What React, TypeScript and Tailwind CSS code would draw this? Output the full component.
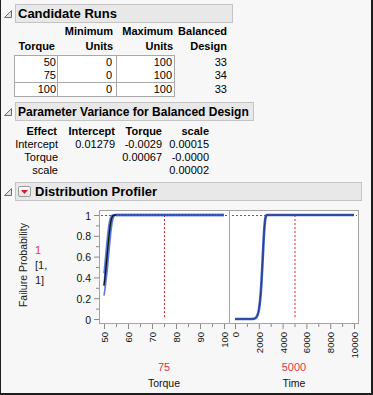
import React from 'react';

// page coordinate helpers for the profiler chart
const yP = (p: number) => 319 - 104 * p;
const x1 = (t: number) => 104 + (t - 50) * 2.4;
const x2 = (T: number) => 235 + T * 0.0119;

const weib1 = (t: number, mu: number) => 1 - Math.exp(-Math.exp((t - mu) / 1.46));
const weib2 = (T: number) => 1 - Math.exp(-Math.pow(T / 2350, 15));

const steps = (a: number, b: number, n: number) => {
    const out: number[] = [];
    for (let i = 0; i <= n; i++) out.push(a + ((b - a) * i) / n);
    return out;
};

const toPath = (pts: [number, number][]) =>
    pts.map((p, i) => (i ? 'L' : 'M') + p[0].toFixed(2) + ',' + p[1].toFixed(2)).join(' ');

const T1 = steps(50, 100, 200);
const T2 = steps(0, 10000, 400);

const mainPath1 = toPath(T1.map(t => [x1(t), yP(weib1(t, 51.39))]));
const upper1 = T1.map(t => [x1(t), yP(weib1(t, 50.8))] as [number, number]);
const lower1 = T1.map(t => [x1(t), yP(weib1(t, 52.0))] as [number, number]);
const band1 = toPath([...upper1, ...lower1.slice().reverse()]) + ' Z';
const upperPath1 = toPath(upper1);
const lowerPath1 = toPath(lower1);
const mainPath2 = toPath(T2.map(T => [x2(T), yP(weib2(T))]));

const Disclosure = () => (
    <svg width="10" height="10" viewBox="0 0 10 10" className="shrink-0">
        <polygon points="8.5,1.5 8.5,8.5 1.5,8.5" fill="#e2e2e2" stroke="#6e6e6e" strokeWidth="1" />
    </svg>
);

const MenuButton = () => (
    <div className="ml-[2px] w-[13px] h-[11px] rounded-[2px] border border-[#9c9c9c] bg-gradient-to-b from-white to-[#e4e4e4] flex items-center justify-center">
        <svg width="7" height="4" viewBox="0 0 7 4">
            <polygon points="0,0 7,0 3.5,4" fill="#e0182a" />
        </svg>
    </div>
);

interface HeaderProps {
    title: string;
    boxClass: string;
    textClass?: string;
    menu?: boolean;
}

const Header: React.FC<HeaderProps> = ({ title, boxClass, textClass = 'text-[13px]', menu }) => (
    <div className="flex items-center h-[19px]">
        <div className="w-[14px] pl-[2px] flex items-center">
            <Disclosure />
        </div>
        <div className={`h-full flex items-center border border-[#c4c4c4] bg-[#e8e8e8] ${boxClass}`}>
            {menu && <MenuButton />}
            <span className={`${menu ? 'ml-[4px]' : 'ml-[2px]'} ${textClass} font-bold leading-none text-black whitespace-nowrap`}>
                {title}
            </span>
        </div>
    </div>
);

const runs = [
    ['50', '0', '100', '33'],
    ['75', '0', '100', '34'],
    ['100', '0', '100', '33'],
];

const CandidateRuns = () => (
    <div className="ml-[13px] mt-[1px] w-[215px]">
        {/* column headers */}
        <div className="grid grid-cols-[44px_59px_58px_54px] text-[11px] font-bold leading-[15px] text-black">
            <div className="text-right pr-[3px]">
                <div>&nbsp;</div>
                <div>Torque</div>
            </div>
            <div className="text-right pr-[4px]">
                <div>Minimum</div>
                <div>Units</div>
            </div>
            <div className="text-right pr-[2px]">
                <div>Maximum</div>
                <div>Units</div>
            </div>
            <div className="text-right pr-[2px]">
                <div>Balanced</div>
                <div>Design</div>
            </div>
        </div>

        {/* rows */}
        <div className="mt-[1px] text-[11px] leading-[13px] text-black">
            {runs.map((r, i) => (
                <div key={i} className="grid grid-cols-[44px_59px_58px_54px] h-[14px]">
                    <div className={`bg-white border-l border-r border-b border-[#a8a8a8] text-right pr-[1px] ${i === 0 ? 'border-t' : ''}`}>
                        {r[0]}
                    </div>
                    <div className={`bg-white border-r border-b border-[#a8a8a8] text-right pr-[4px] ${i === 0 ? 'border-t' : ''}`}>
                        {r[1]}
                    </div>
                    <div className={`bg-white border-r border-b border-[#a8a8a8] text-right pr-[2px] ${i === 0 ? 'border-t' : ''}`}>
                        {r[2]}
                    </div>
                    <div className={`text-right pr-[2px] ${i === 0 ? 'pt-[1px]' : ''}`}>{r[3]}</div>
                </div>
            ))}
        </div>
    </div>
);

const variance = [
    ['Intercept', '0.01279', '-0.0029', '0.00015'],
    ['Torque', '', '0.00067', '-0.0000'],
    ['scale', '', '', '0.00002'],
];

const ParameterVariance = () => (
    <div className="ml-[13px] mt-[4px] text-[11px] leading-[13px] text-black">
        <div className="grid grid-cols-[45px_57px_47px_47px] font-bold">
            <div className="text-right pr-[2px]">Effect</div>
            <div className="text-right pr-[1px]">Intercept</div>
            <div className="text-right pr-[1px]">Torque</div>
            <div className="text-right pr-[1px]">scale</div>
        </div>
        {variance.map((r, i) => (
            <div key={i} className="grid grid-cols-[45px_57px_47px_47px]">
                <div className="text-right pr-[1px]">{r[0]}</div>
                <div className="text-right pr-[1px]">{r[1]}</div>
                <div className="text-right pr-[1px]">{r[2]}</div>
                <div className="text-right pr-[1px]">{r[3]}</div>
            </div>
        ))}
    </div>
);

const Chart = () => {
    const yMajor = [0, 0.2, 0.4, 0.6, 0.8, 1];
    const yMinor = [0.1, 0.3, 0.5, 0.7, 0.9];
    const tMajor = [50, 60, 70, 80, 90, 100];
    const tMinor = [55, 65, 75, 85, 95];
    const TMajor = [0, 2000, 4000, 6000, 8000, 10000];
    const TMinor = [1000, 3000, 5000, 7000, 9000];
    const tick = '#8a8a8a';

    return (
        <svg width="303" height="161" viewBox="0 0 303 161" className="shrink-0">
            <g transform="translate(-58,-201)" fontFamily='"Liberation Sans", Arial, sans-serif'>
                {/* frames */}
                <rect x="99.5" y="210.5" width="130" height="113" fill="white" stroke="#a4a4a4" />
                <rect x="229.5" y="210.5" width="129" height="113" fill="white" stroke="#a4a4a4" />

                {/* y axis */}
                {yMajor.map(p => (
                    <g key={p}>
                        <line x1="94" x2="99" y1={yP(p) + 0.5} y2={yP(p) + 0.5} stroke={tick} />
                        <text x="91" y={yP(p) + 0.5} fontSize="10.5" textAnchor="end" dominantBaseline="central" fill="#111">
                            {p === 0 || p === 1 ? String(p) : p.toFixed(1)}
                        </text>
                    </g>
                ))}
                {yMinor.map(p => (
                    <line key={p} x1="96" x2="99" y1={yP(p) + 0.5} y2={yP(p) + 0.5} stroke={tick} />
                ))}

                {/* x axis, plot 1 */}
                {tMajor.map(t => (
                    <g key={t}>
                        <line x1={x1(t) + 0.5} x2={x1(t) + 0.5} y1="324" y2="329" stroke={tick} />
                        <text
                            transform={`translate(${x1(t) + 0.5},332) rotate(-90)`}
                            fontSize="9.5"
                            textAnchor="end"
                            dominantBaseline="central"
                            fill="#111"
                        >
                            {t}
                        </text>
                    </g>
                ))}
                {tMinor.map(t => (
                    <line key={t} x1={x1(t) + 0.5} x2={x1(t) + 0.5} y1="324" y2="327" stroke={tick} />
                ))}

                {/* x axis, plot 2 */}
                {TMajor.map(T => (
                    <g key={T}>
                        <line x1={x2(T) + 0.5} x2={x2(T) + 0.5} y1="324" y2="329" stroke={tick} />
                        <text
                            transform={`translate(${x2(T) + 0.5},332) rotate(-90)`}
                            fontSize="9.5"
                            textAnchor="end"
                            dominantBaseline="central"
                            fill="#111"
                        >
                            {T}
                        </text>
                    </g>
                ))}
                {TMinor.map(T => (
                    <line key={T} x1={x2(T) + 0.5} x2={x2(T) + 0.5} y1="324" y2="327" stroke={tick} />
                ))}

                {/* crosshairs */}
                <line x1="101" x2="228" y1={yP(1) + 0.5} y2={yP(1) + 0.5} stroke="#e8202a" strokeDasharray="2 2" />
                <line x1="232" x2="357" y1={yP(1) + 0.5} y2={yP(1) + 0.5} stroke="#e8202a" strokeDasharray="2 2" />
                <line x1={x1(75) + 0.5} x2={x1(75) + 0.5} y1={yP(1)} y2={yP(0)} stroke="#e8202a" strokeDasharray="2 2" />
                <line x1={x2(5000) + 0.5} x2={x2(5000) + 0.5} y1={yP(1)} y2={yP(0)} stroke="#e8202a" strokeDasharray="2 2" />

                {/* plot 1 curve with band */}
                <path d={band1} fill="#b9cdf4" />
                <path d={upperPath1} fill="none" stroke="#5b80dc" strokeWidth="1.6" />
                <path d={lowerPath1} fill="none" stroke="#5b80dc" strokeWidth="1.6" />
                <path d={mainPath1} fill="none" stroke="#3556b8" strokeWidth="2.4" strokeLinejoin="round" opacity="0.55" />
                <path d={mainPath1} fill="none" stroke="#111" strokeWidth="1.3" strokeLinejoin="round" />
                <line x1={x1(55)} x2={x1(100)} y1={yP(1)} y2={yP(1)} stroke="#3a5cc0" strokeWidth="2.6" />
                <line x1={x1(55)} x2={x1(100)} y1={yP(1)} y2={yP(1)} stroke="#24347a" strokeWidth="0.8" strokeDasharray="1 2" />

                {/* plot 2 curve */}
                <path d={mainPath2} fill="none" stroke="#3a5cc0" strokeWidth="2.6" strokeLinejoin="round" />
                <path d={mainPath2} fill="none" stroke="#24347a" strokeWidth="0.8" strokeLinejoin="round" />
            </g>
        </svg>
    );
};

const DistributionProfiler = () => (
    <div>
        <div className="flex">
            <div className="w-[57px] h-[158px] pb-[30px] pl-[16px] flex items-center">
                <div className="w-[12px] flex justify-center">
                    <div className="[writing-mode:vertical-rl] rotate-180 text-[10.5px] leading-none text-[#222] whitespace-nowrap">
                        Failure Probability
                    </div>
                </div>
                <div className="ml-[6px] flex flex-col text-[11px] leading-[15px] text-[#1a1a2a]">
                    <span className="text-[#e8334a]">1</span>
                    <span>[1,</span>
                    <span>1]</span>
                </div>
            </div>
            <Chart />
        </div>
        <div className="flex ml-[98px] -mt-[3px]">
            <div className="w-[130px] text-center">
                <div className="text-[11px] leading-[16px] text-[#e8334a]">75</div>
                <div className="text-[10.5px] leading-[16px] text-[#111]">Torque</div>
            </div>
            <div className="w-[130px] text-center">
                <div className="text-[11px] leading-[16px] text-[#e8334a]">5000</div>
                <div className="text-[10.5px] leading-[16px] text-[#111]">Time</div>
            </div>
        </div>
    </div>
);

export default function App() {
    return (
        <div className="w-[373px] h-[395px] box-border overflow-hidden bg-[#f7f7f7] border-l border-r-2 border-b-2 border-[#1e1e1e] pt-[4px] font-['Liberation_Sans',Arial,sans-serif]">
            <Header title="Candidate Runs" boxClass="w-[218px]" />
            <CandidateRuns />
            <div className="mt-[5px]">
                <Header title="Parameter Variance for Balanced Design" boxClass="w-[239px]" textClass="text-[12px]" />
            </div>
            <ParameterVariance />
            <div className="mt-[5px]">
                <Header title="Distribution Profiler" boxClass="w-[347px]" menu />
            </div>
            <DistributionProfiler />
        </div>
    );
}
